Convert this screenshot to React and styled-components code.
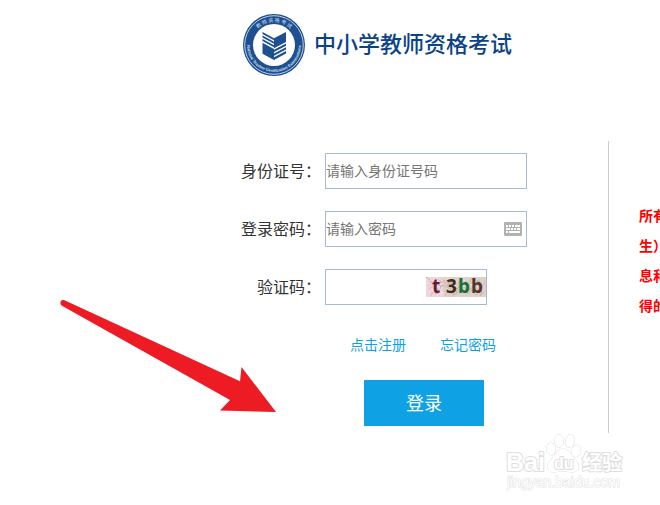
import React from 'react';
import styled, { createGlobalStyle } from 'styled-components';

const GlobalStyle = createGlobalStyle`
    * {
        box-sizing: border-box;
    }
    body {
        margin: 0;
        background: #fff;
        color: #333;
        font-family: "Noto Sans CJK SC", sans-serif;
    }
`;

const Page = styled.div`
    position: relative;
    min-height: 100vh;
    overflow: hidden;
`;

const Header = styled.header`
    display: flex;
    align-items: flex-start;
    gap: 9px;
    padding: 14px 0 0 243px;
`;

const Title = styled.h1`
    margin: 0;
    color: #0b4388;
    font-size: 22px;
    font-weight: 500;
    line-height: 56px;
    white-space: nowrap;
`;

const Main = styled.main`
    display: grid;
    grid-template-columns: minmax(0, 609px) minmax(0, 1fr);
    margin-top: 65px;
`;

const Form = styled.form`
    padding: 12px 0 7px;
    border-right: 1px solid #ccc;
`;

const Row = styled.div`
    display: flex;
    align-items: flex-start;
    gap: 4px;
    margin-bottom: 22px;
`;

const Label = styled.label`
    width: 321px;
    font-size: 16px;
    line-height: 34px;
    text-align: right;
    white-space: nowrap;
`;

const Field = styled.div`
    display: flex;
    align-items: center;
    width: ${(props) => (props.$short ? '162px' : '202px')};
    height: 36px;
    padding-right: ${(props) => (props.$icon ? '4px' : '0')};
    border: 1px solid #a5bbd1;
`;

const Input = styled.input`
    flex: 1;
    min-width: 0;
    height: 34px;
    padding: 0 0 2px;
    border: 0;
    outline: 0;
    background: none;
    font-family: inherit;
    font-size: 14px;

    &::placeholder {
        color: #757575;
    }
`;

const Links = styled.nav`
    display: flex;
    gap: 34px;
    padding: 7px 0 0 350px;
`;

const Link = styled.a`
    color: #0ea2e4;
    font-size: 14px;
    line-height: 20px;
    text-decoration: none;
`;

const Submit = styled.button`
    display: block;
    width: 120px;
    height: 46px;
    margin: 26px 0 0 364px;
    padding: 0 0 2px;
    border: 0;
    background: #0ea2e4;
    color: #fff;
    font-family: inherit;
    font-size: 18px;
`;

const Notice = styled.p`
    margin: 0;
    padding: 59px 0 0 30px;
    overflow: hidden;
    color: #f00;
    font-size: 14px;
    font-weight: 700;
    line-height: 30px;
    white-space: pre;
`;

const CaptchaImage = styled.svg`
    overflow: visible;
`;

const Arrow = styled.svg`
    position: absolute;
    top: 299px;
    left: 59px;
    pointer-events: none;
`;

const Watermark = styled.svg`
    position: absolute;
    top: 430px;
    left: 502px;
    pointer-events: none;
`;

const Logo = () => (
    <svg width="62" height="62" viewBox="0 0 62 62" aria-hidden="true">
        <defs>
            <path id="arc-top" d="M 8 31 A 23 23 0 0 1 54 31" />
            <path id="arc-bottom" d="M 5.2 23 A 27 27 0 1 0 56.8 23" />
        </defs>
        <circle cx="31" cy="31" r="31" fill="#1d4f91" />
        <circle cx="31" cy="31" r="29.3" fill="none" stroke="#e6edf6" strokeWidth="0.8" />
        <circle cx="31" cy="31" r="21" fill="#fff" />
        <text fill="#d5e0ef" fontSize="5" fontFamily="Noto Sans CJK SC, sans-serif">
            <textPath href="#arc-top" startOffset="50%" textAnchor="middle">教  师  资  格  考  试</textPath>
        </text>
        <text fill="#d5e0ef" fontSize="4" fontWeight="700" fontFamily="Liberation Sans, sans-serif">
            <textPath href="#arc-bottom" startOffset="50%" textAnchor="middle">
                National Teacher Certification Examinations
            </textPath>
        </text>
        <g fill="#1d4f91">
            <path d="M19.5 18 L31 24.3 V26.3 L19.5 20 Z" />
            <path d="M19.5 21.5 L31 27.8 V29.8 L19.5 23.5 Z" />
            <path d="M19.5 25 L31 31.3 V33.3 L19.5 27 Z" />
            <path d="M19.5 28.8 L31 35 V46 L19.5 39.8 Z" />
            <path d="M31 24.3 L43 18 V28 L31 34.3 Z" />
            <path d="M31 35.8 L43 29.5 V31.7 L31 38 Z" />
            <path d="M31 39.5 L43 33.2 V35.4 L31 41.7 Z" />
            <path d="M31 43.2 L43 36.9 V39.5 L31 46 Z" />
        </g>
    </svg>
);

const Keyboard = () => (
    <svg width="18" height="14" viewBox="0 0 18 14" aria-hidden="true">
        <rect width="18" height="14" rx="1" fill="#b2b2b2" />
        <path
            fill="#fff"
            d="M2 3h2v2h-2z M5 3h2v2h-2z M8 3h2v2h-2z M11 3h5v2h-5z M2 6h4v2h-4z M7 6h2v2h-2z M10 6h2v2h-2z M13 6h3v2h-3z M2 9h2v2h-2z M5 9h11v2h-11z"
        />
    </svg>
);

const noiseColors = ['#a8b29a', '#d9a3ae', '#b5a08c', '#f6eeee', '#c9b7a4', '#e6c3c9'];

const noise = Array.from({ length: 150 }, (_, i) => ({
    x: 4 + ((i * 37) % 53),
    y: 3 + ((i * 23) % 15),
    dx: ((i * 7) % 9) - 4,
    dy: ((i * 5) % 7) - 3,
    color: noiseColors[i % 6],
}));

const Captcha = () => (
    <CaptchaImage width="60" height="20" viewBox="0 0 60 20" role="img" aria-label="验证码">
        <rect width="60" height="20" fill="#dfd0c8" />
        <rect width="18" height="20" fill="#efd5dc" />
        {noise.map((n, i) => (
            <line key={i} x1={n.x} y1={n.y} x2={n.x + n.dx} y2={n.y + n.dy} stroke={n.color} strokeWidth="0.7" />
        ))}
        <g fontFamily="Noto Sans, sans-serif" fontSize="19" fontWeight="700">
            <text x="6" y="16" fill="#6b1738">t</text>
            <text x="20" y="16" fill="#3f2a1e">3</text>
            <text x="32" y="16" fill="#18703c">b</text>
            <text x="45" y="16" fill="#523629">b</text>
        </g>
    </CaptchaImage>
);

const App = () => (
    <Page lang="zh-CN">
        <GlobalStyle />
        <Header>
            <Logo />
            <Title>中小学教师资格考试</Title>
        </Header>
        <Main>
            <Form onSubmit={(e) => e.preventDefault()}>
                <Row>
                    <Label htmlFor="idcard">身份证号：</Label>
                    <Field>
                        <Input id="idcard" type="text" placeholder="请输入身份证号码" />
                    </Field>
                </Row>
                <Row>
                    <Label htmlFor="password">登录密码：</Label>
                    <Field $icon>
                        <Input id="password" type="password" placeholder="请输入密码" />
                        <Keyboard />
                    </Field>
                </Row>
                <Row>
                    <Label htmlFor="captcha">验证码：</Label>
                    <Field $short>
                        <Input id="captcha" type="text" />
                        <Captcha />
                    </Field>
                </Row>
                <Links>
                    <Link href="#register">点击注册</Link>
                    <Link href="#forgot">忘记密码</Link>
                </Links>
                <Submit type="submit">登录</Submit>
            </Form>
            <Notice>{'所有\n生）\n息和\n得的'}</Notice>
        </Main>
        <Arrow width="218" height="114" viewBox="0 0 218 114" aria-hidden="true">
            <path fill="#ed1c24" d="M5.5 1.3 L181 82.3 L182.5 68 L217 113 L161 111.5 L171 101 L2.5 6.5 C0 4 2 0 5.5 1.3 Z" />
        </Arrow>
        <Watermark width="130" height="64" viewBox="0 0 130 64" aria-hidden="true">
            <g
                fill="#fff"
                stroke="#dedede"
                strokeWidth="2"
                strokeLinejoin="round"
                paintOrder="stroke"
                fontFamily="Liberation Sans, Noto Sans CJK SC, sans-serif"
                fontWeight="700"
            >
                <text x="4" y="41" fontSize="25">Bai</text>
                <g strokeWidth="1">
                    <ellipse cx="49" cy="19" rx="4.5" ry="6" transform="rotate(-8 49 19)" />
                    <ellipse cx="57" cy="11" rx="4.5" ry="6.5" />
                    <ellipse cx="68" cy="11" rx="4.5" ry="6.5" transform="rotate(12 68 11)" />
                    <ellipse cx="74" cy="21" rx="4.5" ry="6" transform="rotate(15 74 21)" />
                    <path d="M61 19 C68 19 69 25 73 29 C80 36 75 43 69 42 C64 41 58 41 53 42 C45 43 43 34 50 28 C54 25 55 19 61 19 Z" />
                </g>
                <text x="52" y="39" fontSize="16">du</text>
                <text x="80" y="40" fontSize="20">经验</text>
                <text x="5" y="57" fontSize="14" fontWeight="400" strokeWidth="1">jingyan.baidu.com</text>
            </g>
        </Watermark>
    </Page>
);

export default App;
